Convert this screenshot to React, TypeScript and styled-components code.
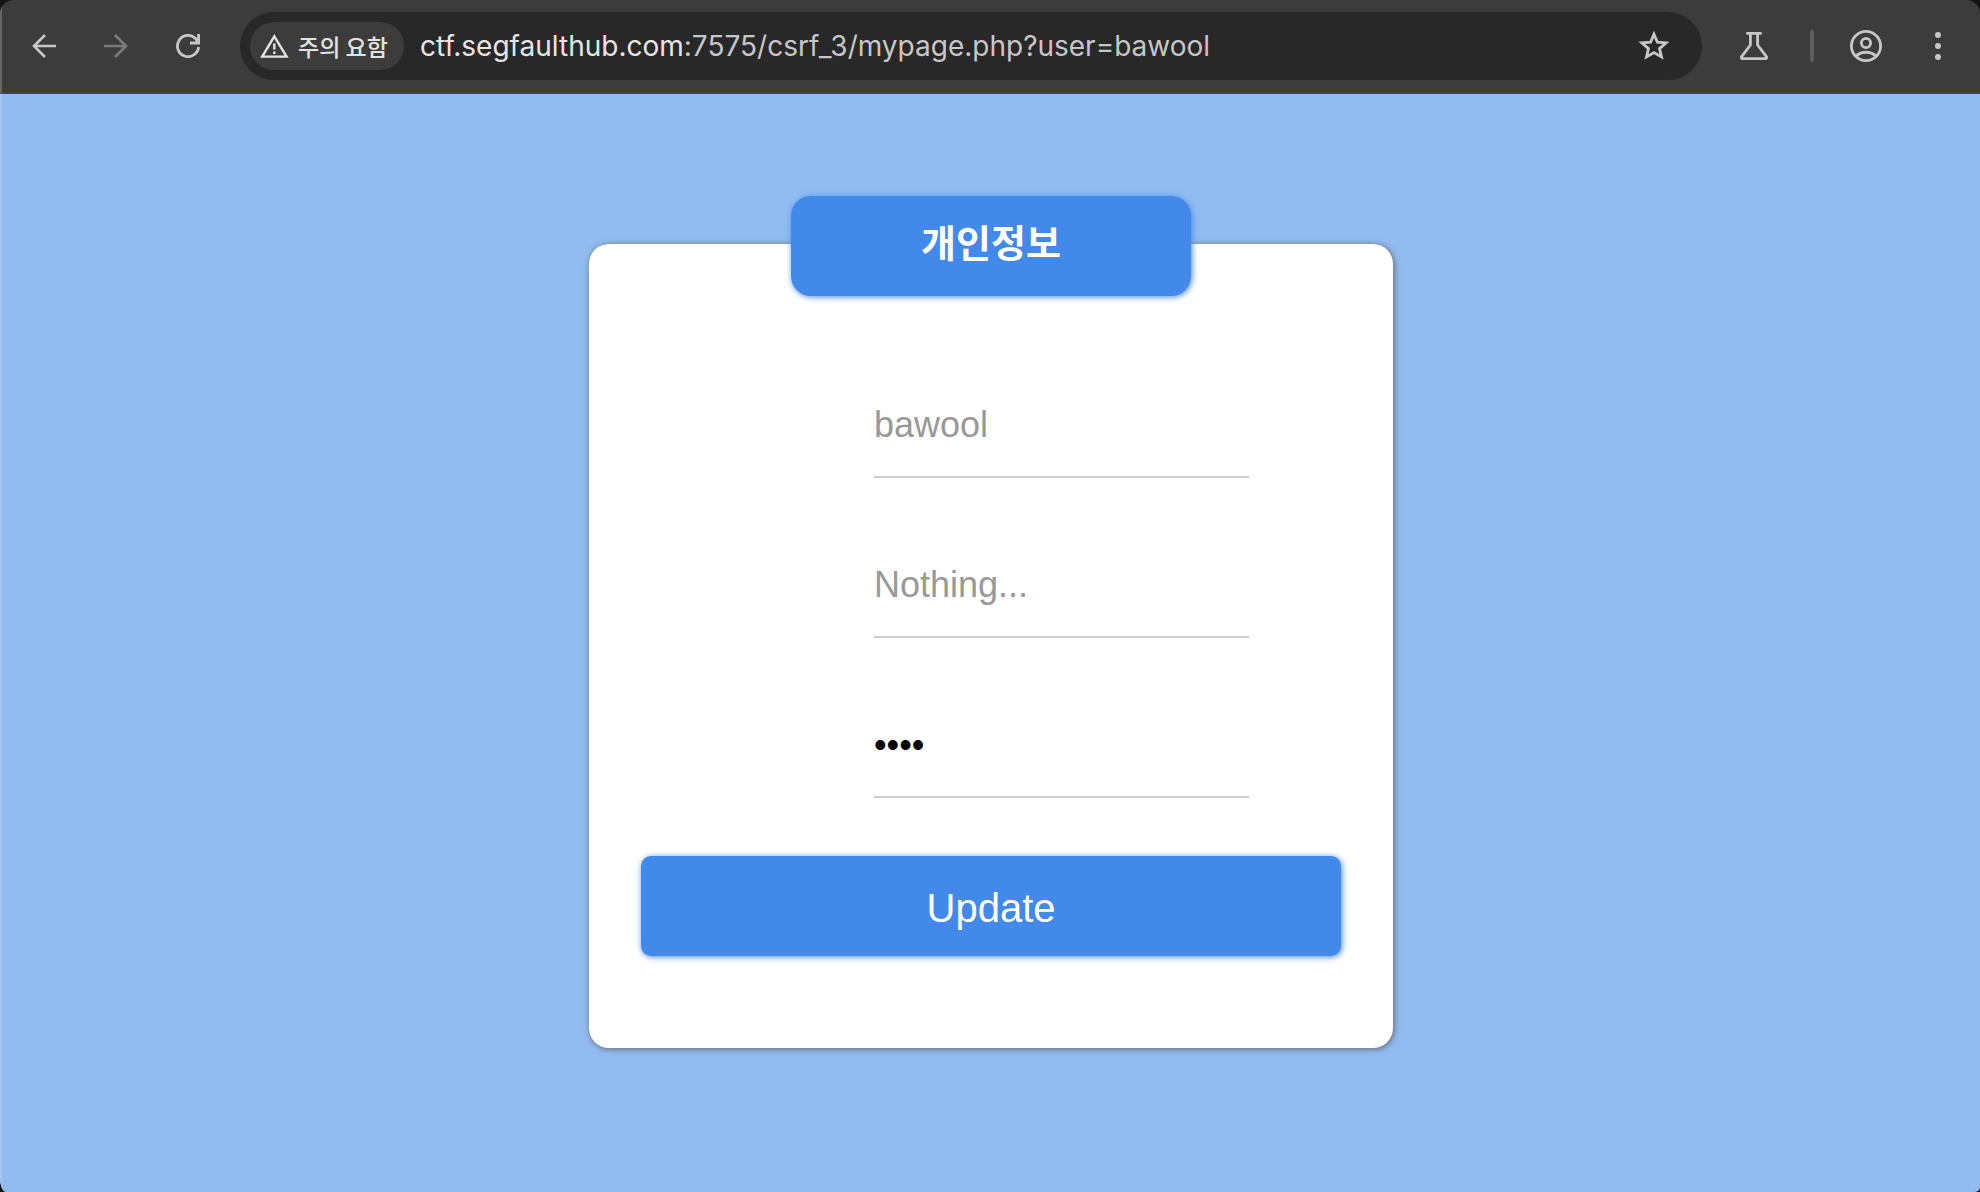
import React from "react";
import styled, { createGlobalStyle } from "styled-components";

const GlobalStyle = createGlobalStyle`
  * { box-sizing: border-box; }
  html, body { margin: 0; background: #141414; }
  body { font-family: "Liberation Sans", "Noto Sans CJK KR", sans-serif; }
`;

const Window = styled.div`
  min-height: 100vh;
  display: flex;
  flex-direction: column;
  overflow: hidden;
  border-radius: 14px 14px 5px 6px / 14px 14px 5px 14px;
`;

const Toolbar = styled.header`
  display: flex;
  align-items: center;
  gap: 32px;
  height: 94px;
  padding: 0 22px;
  background: #3c3c3c;
  border-left: 2px solid #666666;
  border-bottom: 2px solid #474747;
`;

const IconButton = styled.button`
  display: flex;
  flex: none;
  align-items: center;
  justify-content: center;
  width: 40px;
  height: 40px;
  padding: 0;
  border: 0;
  background: none;
  color: #c7c7c7;

  &:disabled {
    color: #7b7b7b;
  }
`;

const AddressBar = styled.div`
  display: flex;
  flex: 1;
  min-width: 0;
  align-items: center;
  height: 68px;
  padding: 0 28px 0 10px;
  border-radius: 34px;
  background: #282828;
`;

const SecurityChip = styled.button`
  display: flex;
  flex: none;
  align-items: center;
  gap: 9px;
  width: 154px;
  height: 48px;
  padding: 0 0 0 10px;
  border: 0;
  border-radius: 24px;
  background: #3c3c3c;
  color: #e3e3e3;
  font-family: "Noto Sans CJK KR", sans-serif;
  font-size: 23px;
  font-weight: 500;
  line-height: 32px;
  white-space: nowrap;
`;

const Url = styled.div`
  flex: 1;
  min-width: 0;
  overflow: hidden;
  padding-left: 16px;
  color: #c7c7c7;
  font-family: Inter, sans-serif;
  font-size: 28px;
  line-height: 40px;
  white-space: nowrap;
`;

const Host = styled.span`
  color: #e6e6e6;
`;

const Divider = styled.span`
  flex: none;
  width: 4px;
  height: 32px;
  margin-left: 4px;
  border-radius: 2px;
  background: #5e5e5e;
`;

const Page = styled.main`
  flex: 1;
  padding: 150px 0 144px;
  background: #91bbf1;
  border-left: 2px solid #a6c8f4;
`;

const Card = styled.section`
  display: flex;
  flex-direction: column;
  align-items: center;
  width: 804px;
  max-width: 100%;
  margin: 0 auto;
  padding: 0 52px 92px;
  border-radius: 20px;
  background: #ffffff;
  box-shadow: 1px 1px 6px #666666;
`;

const Title = styled.h1`
  width: 400px;
  height: 100px;
  margin: -48px 0 78px;
  border-radius: 20px;
  background: #4389ea;
  box-shadow: 1px 1px 6px #4389ea;
  color: #ffffff;
  font-size: 38px;
  font-weight: 700;
  line-height: 96px;
  text-align: center;
`;

const Form = styled.form`
  display: flex;
  flex-direction: column;
  gap: 58px;
  width: 100%;
`;

const Fields = styled.div`
  display: flex;
  flex-direction: column;
  gap: 56px;
`;

const Field = styled.input`
  width: 375px;
  height: 104px;
  margin-left: 233px;
  padding: 0;
  border: 0;
  border-bottom: 2px solid #cccccc;
  outline: none;
  background: none;
  color: #000000;
  font-family: inherit;
  font-size: 36px;

  &::placeholder {
    color: #999999;
    opacity: 1;
  }
`;

const SubmitButton = styled.button`
  width: 100%;
  height: 100px;
  padding: 4px 0 0;
  border: 0;
  border-radius: 10px;
  background: #4389ea;
  box-shadow: 1px 1px 6px #4389ea;
  color: #ffffff;
  font-family: inherit;
  font-size: 40px;
`;

const BackIcon = () => (
  <svg width="24" height="24" viewBox="0 0 24 24" fill="none" stroke="currentColor" strokeWidth="2.6">
    <path d="M24 12H2M13 1 2 12l11 11" />
  </svg>
);

const ForwardIcon = () => (
  <svg width="24" height="24" viewBox="0 0 24 24" fill="none" stroke="currentColor" strokeWidth="2.6">
    <path d="M0 12h22M11 1l11 11-11 11" />
  </svg>
);

const ReloadIcon = () => (
  <svg width="24" height="24" viewBox="0 0 24 24" fill="none" stroke="currentColor" strokeWidth="2.8">
    <path d="M22.6 13A10.6 10.6 0 1 1 19.8 4.8L22 8.4M22.6 0v9H14" />
  </svg>
);

const WarningIcon = () => (
  <svg width="29" height="24" viewBox="0 0 29 24" fill="none" stroke="currentColor" strokeWidth="2.4">
    <path d="M14.3 2.4 2.2 22.6h24.4Z" />
    <path d="M14.3 9.6v6M14.3 17.6V20" />
  </svg>
);

const StarIcon = () => (
  <svg width="32" height="32" viewBox="0 0 32 32" fill="none" stroke="currentColor" strokeWidth="2.8">
    <path d="m16 4.2 3.4 8 8.7.7-6.6 5.7 2 8.4-7.5-4.4L8.500 27l2-8.400-6.600-5.700 8.700-.7Z" />
  </svg>
);

const FlaskIcon = () => (
  <svg width="28" height="28" viewBox="0 0 28 28" fill="none" stroke="currentColor" strokeWidth="2.8" strokeLinejoin="round">
    <path d="M7.400 1.400h13.200" strokeLinecap="round" />
    <path d="M10.400 2v11L1.600 24.600c-.5.8-.2 2 1 2h22.800c1.200 0 1.500-1.200 1-2L17.600 13V2" />
  </svg>
);

const ProfileIcon = () => (
  <svg width="32" height="32" viewBox="0 0 32 32" fill="none" stroke="currentColor" strokeWidth="2.8">
    <circle cx="16" cy="16" r="14.600" />
    <circle cx="16" cy="13" r="4.600" />
    <path d="M6 26c5.600-5 14.400-5 20 0" />
  </svg>
);

const MoreIcon = () => (
  <svg width="8" height="28" viewBox="0 0 8 28" fill="currentColor">
    <circle cx="4" cy="3" r="3" />
    <circle cx="4" cy="14" r="3" />
    <circle cx="4" cy="25" r="3" />
  </svg>
);

export default function App() {
  return (
    <>
      <GlobalStyle />
      <Window>
        <Toolbar>
          <IconButton aria-label="Back"><BackIcon /></IconButton>
          <IconButton aria-label="Forward" disabled><ForwardIcon /></IconButton>
          <IconButton aria-label="Reload"><ReloadIcon /></IconButton>
          <AddressBar>
            <SecurityChip><WarningIcon />주의 요함</SecurityChip>
            <Url><Host>ctf.segfaulthub.com</Host>:7575/csrf_3/mypage.php?user=bawool</Url>
            <IconButton aria-label="Bookmark"><StarIcon /></IconButton>
          </AddressBar>
          <IconButton aria-label="Labs"><FlaskIcon /></IconButton>
          <Divider />
          <IconButton aria-label="Profile"><ProfileIcon /></IconButton>
          <IconButton aria-label="Menu"><MoreIcon /></IconButton>
        </Toolbar>
        <Page>
          <Card>
            <Title>개인정보</Title>
            <Form onSubmit={(event) => event.preventDefault()}>
              <Fields>
                <Field type="text" name="id" aria-label="ID" placeholder="bawool" />
                <Field type="text" name="info" aria-label="Info" placeholder="Nothing..." />
                <Field type="password" name="pw" aria-label="Password" defaultValue="1234" />
              </Fields>
              <SubmitButton type="submit">Update</SubmitButton>
            </Form>
          </Card>
        </Page>
      </Window>
    </>
  );
}
